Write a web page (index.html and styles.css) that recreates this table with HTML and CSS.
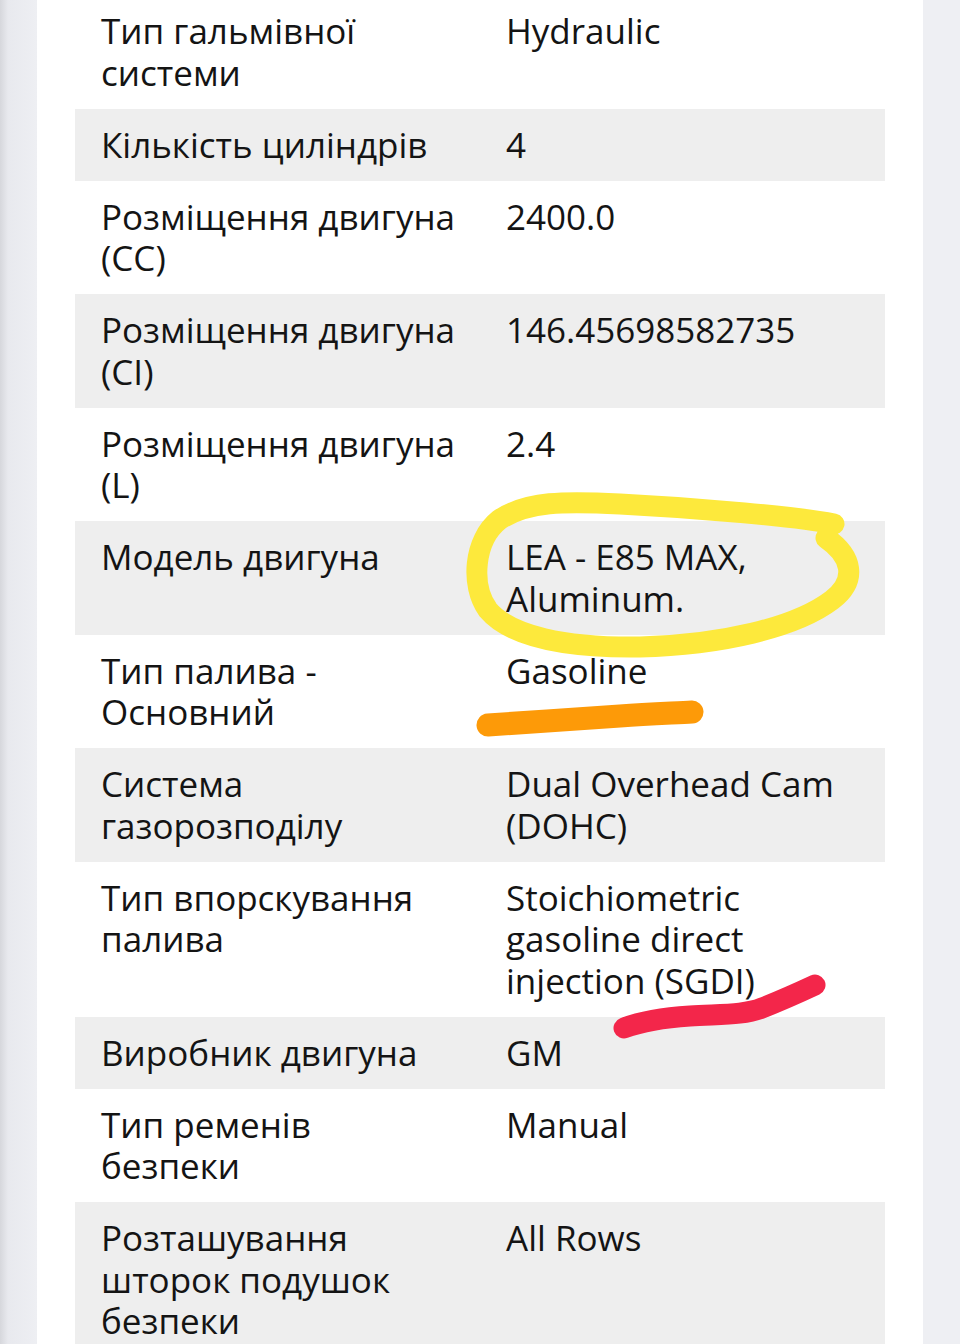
FILE: index.html
```html
<!DOCTYPE html>
<html lang="uk">
<head>
    <meta charset="UTF-8">
    <meta name="viewport" content="width=device-width, initial-scale=1.0">
    <title>Характеристики двигуна</title>
    <link rel="stylesheet" href="styles.css">
</head>
<body>
    <div class="page">
        <table class="specs">
            <colgroup>
                <col class="col-name">
                <col class="col-value">
            </colgroup>
            <tr><td>Тип гальмівної системи</td><td>Hydraulic</td></tr>
            <tr><td>Кількість циліндрів</td><td>4</td></tr>
            <tr><td>Розміщення двигуна (CC)</td><td>2400.0</td></tr>
            <tr><td>Розміщення двигуна (CI)</td><td>146.45698582735</td></tr>
            <tr><td>Розміщення двигуна (L)</td><td>2.4</td></tr>
            <tr><td>Модель двигуна</td><td>LEA - E85 MAX, Aluminum.</td></tr>
            <tr><td>Тип палива - Основний</td><td>Gasoline</td></tr>
            <tr><td>Система газорозподілу</td><td>Dual Overhead Cam (DOHC)</td></tr>
            <tr><td>Тип впорскування палива</td><td>Stoichiometric gasoline direct injection (SGDI)</td></tr>
            <tr><td>Виробник двигуна</td><td>GM</td></tr>
            <tr><td>Тип ременів безпеки</td><td>Manual</td></tr>
            <tr><td>Розташування шторок подушок безпеки</td><td>All Rows</td></tr>
        </table>
    </div>

    <!-- hand-drawn marks on top of the screenshot -->
    <svg class="marks" width="960" height="1344" viewBox="0 0 960 1344">
        <path class="mark-yellow" d="M834 524 C800 517 700 508 620 504 C565 501 527 501 499 520 C474 540 470 585 488 610 C510 636 565 648 640 647 C720 645 795 628 832 600 C858 580 852 556 826 538"/>
        <path class="mark-orange" d="M488 725 C530 722 580 719 620 716 C650 714 675 713 692 712"/>
        <path class="mark-red" d="M624 1028 C640 1022 660 1018 690 1016 C720 1014 745 1015 762 1008 C785 999 800 992 815 985"/>
    </svg>
</body>
</html>
```

FILE: styles.css
```css
body {
    margin: 0;
    padding: 0;
    font-family: "Open Sans", "Noto Sans", sans-serif;
    background: linear-gradient(90deg, #d6d7dc 0, #e8e9ee 8px, #eeeff3 37px);
    background-color: #eceef2;
    color: #141414;
    position: relative;
    overflow: hidden;
    height: 1344px;
}
.page {
    background: #fff;
    margin: 0 37px;
    padding: 0 38px;
    height: 1344px;
    overflow: hidden;
}
.specs {
    width: 810px;
    margin-top: -5px;
    border-collapse: collapse;
    table-layout: fixed;
    font-size: 35px;
    font-weight: 380;
    line-height: 41.5px;
}
.col-name {
    width: 405px;
}
.specs td {
    vertical-align: top;
    padding: 15.25px 24px 15.25px 26px;
}
.specs tr:nth-child(even) {
    background: #eeeeee;
}
.marks {
    position: absolute;
    top: 0;
    left: 0;
    pointer-events: none;
}
.marks path {
    fill: none;
    stroke-linecap: round;
    stroke-linejoin: round;
}
.mark-yellow {
    stroke: #fde93c;
    stroke-width: 21;
}
.mark-orange {
    stroke: #fd9a08;
    stroke-width: 23;
}
.mark-red {
    stroke: #f3264a;
    stroke-width: 21;
}
```
